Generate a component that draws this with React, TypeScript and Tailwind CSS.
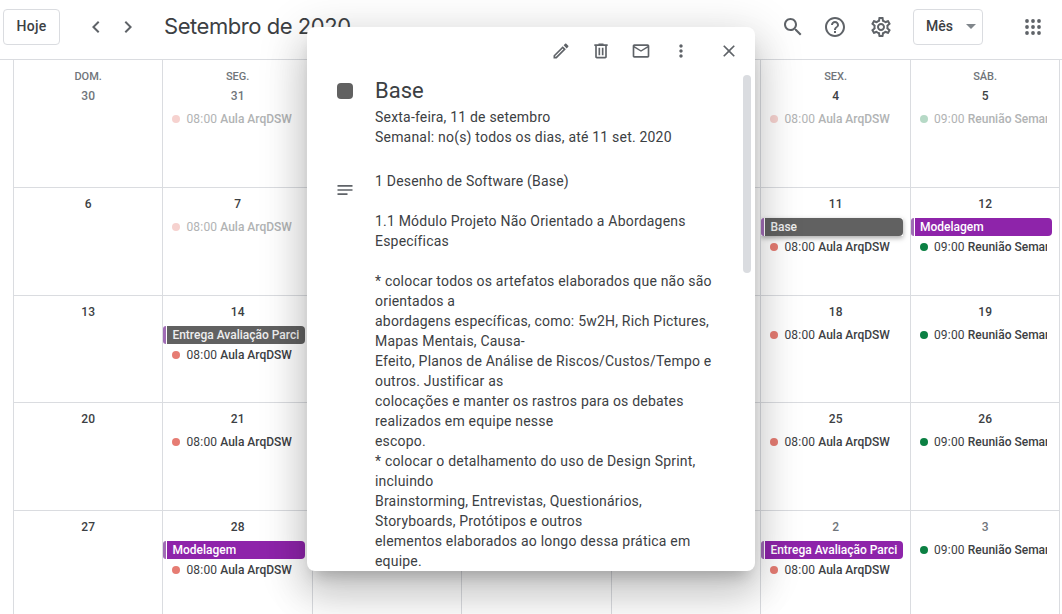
import React from "react";

interface IconProps {
  d: string;
  className?: string;
}

type CalEvent =
  | { kind: "timed"; time: string; title: string; color: "red" | "green"; past?: boolean }
  | { kind: "chip"; title: string; color: "purple" | "graphite"; raised?: boolean };

interface Day {
  label: string;
  muted?: boolean;
  events?: CalEvent[];
}

const Icon: React.FC<IconProps> = ({ d, className }) => (
  <svg viewBox="0 0 24 24" className={className} fill="currentColor">
    <path d={d} />
  </svg>
);

const paths = {
  left: "M15.41 7.41L14 6l-6 6 6 6 1.41-1.41L10.83 12z",
  right: "M10 6L8.59 7.41 13.17 12l-4.58 4.59L10 18l6-6z",
  search:
    "M15.5 14h-.79l-.28-.27C15.41 12.59 16 11.11 16 9.5 16 5.91 13.09 3 9.5 3S3 5.91 3 9.5 5.91 16 9.5 16c1.61 0 3.09-.59 4.23-1.57l.27.28v.79l5 4.99L20.49 19l-4.99-5zm-6 0C7.01 14 5 11.99 5 9.5S7.01 5 9.5 5 14 7.01 14 9.5 11.99 14 9.5 14z",
  help:
    "M11 18h2v-2h-2v2zm1-16C6.48 2 2 6.48 2 12s4.48 10 10 10 10-4.48 10-10S17.52 2 12 2zm0 18c-4.41 0-8-3.59-8-8s3.59-8 8-8 8 3.59 8 8-3.59 8-8 8zm0-14c-2.21 0-4 1.79-4 4h2c0-1.1.9-2 2-2s2 .9 2 2c0 2-3 1.75-3 5h2c0-2.25 3-2.5 3-5 0-2.21-1.79-4-4-4z",
  settings:
    "M19.43 12.98c.04-.32.07-.64.07-.98 0-.34-.03-.66-.07-.98l2.11-1.65c.19-.15.24-.42.12-.64l-2-3.46c-.09-.16-.26-.25-.44-.25-.06 0-.12.01-.17.03l-2.49 1c-.52-.4-1.08-.73-1.69-.98l-.38-2.65C14.46 2.18 14.25 2 14 2h-4c-.25 0-.46.18-.49.42l-.38 2.65c-.61.25-1.17.59-1.69.98l-2.49-1c-.06-.02-.12-.03-.18-.03-.17 0-.34.09-.43.25l-2 3.46c-.13.22-.07.49.12.64l2.11 1.65c-.04.32-.07.65-.07.98 0 .33.03.66.07.98l-2.11 1.65c-.19.15-.24.42-.12.64l2 3.46c.09.16.26.25.44.25.06 0 .12-.01.17-.03l2.49-1c.52.4 1.08.73 1.69.98l.38 2.65c.03.24.24.42.49.42h4c.25 0 .46-.18.49-.42l.38-2.65c.61-.25 1.17-.59 1.69-.98l2.49 1c.06.02.12.03.18.03.17 0 .34-.09.43-.25l2-3.46c.12-.22.07-.49-.12-.64l-2.11-1.65zm-1.98-1.71c.04.31.05.52.05.73 0 .21-.02.43-.05.73l-.14 1.13.89.7 1.08.84-.7 1.21-1.27-.51-1.04-.42-.9.68c-.43.32-.84.56-1.25.73l-1.06.43-.16 1.13-.2 1.35h-1.4l-.19-1.35-.16-1.13-1.06-.43c-.43-.18-.83-.41-1.23-.71l-.91-.7-1.06.43-1.27.51-.7-1.21 1.08-.84.89-.7-.14-1.13c-.03-.31-.05-.54-.05-.74s.02-.43.05-.73l.14-1.13-.89-.7-1.08-.84.7-1.21 1.27.51 1.04.42.9-.68c.43-.32.84-.56 1.25-.73l1.06-.43.16-1.13.2-1.35h1.39l.19 1.35.16 1.13 1.06.43c.43.18.83.41 1.23.71l.91.7 1.06-.43 1.27-.51.7 1.21-1.07.85-.89.7.14 1.13zM12 8c-2.21 0-4 1.79-4 4s1.79 4 4 4 4-1.79 4-4-1.79-4-4-4zm0 6c-1.1 0-2-.9-2-2s.9-2 2-2 2 .9 2 2-.9 2-2 2z",
  edit:
    "M14.06 9.02l.92.92L5.92 19H5v-.92l9.06-9.06M17.66 3c-.25 0-.51.1-.7.29l-1.83 1.83 3.75 3.75 1.83-1.83c.39-.39.39-1.02 0-1.41l-2.34-2.34c-.2-.2-.45-.29-.71-.29zm-3.6 3.19L3 17.25V21h3.75L17.81 9.94l-3.75-3.75z",
  trash:
    "M15 4V3H9v1H4v2h1v13c0 1.1.9 2 2 2h10c1.1 0 2-.9 2-2V6h1V4h-5zm2 15H7V6h10v13zM9 8h2v9H9zm4 0h2v9h-2z",
  mail:
    "M22 6c0-1.1-.9-2-2-2H4c-1.1 0-2 .9-2 2v12c0 1.1.9 2 2 2h16c1.1 0 2-.9 2-2V6zm-2 0l-8 5-8-5h16zm0 12H4V8l8 5 8-5v10z",
  more:
    "M12 8c1.1 0 2-.9 2-2s-.9-2-2-2-2 .9-2 2 .9 2 2 2zm0 2c-1.1 0-2 .9-2 2s.9 2 2 2 2-.9 2-2-.9-2-2-2zm0 6c-1.1 0-2 .9-2 2s.9 2 2 2 2-.9 2-2-.9-2-2-2z",
  close:
    "M19 6.41L17.59 5 12 10.59 6.41 5 5 6.41 10.59 12 5 17.59 6.41 19 12 13.41 17.59 19 19 17.59 13.41 12z",
  notes: "M3 18h12v-2H3v2zM3 6v2h18V6H3zm0 7h18v-2H3v2z",
};

const aula = (past?: boolean): CalEvent => ({
  kind: "timed",
  time: "08:00",
  title: "Aula ArqDSW",
  color: "red",
  past,
});
const reuniao = (past?: boolean): CalEvent => ({
  kind: "timed",
  time: "09:00",
  title: "Reunião Semanal",
  color: "green",
  past,
});

const weekDays = ["DOM.", "SEG.", "TER.", "QUA.", "QUI.", "SEX.", "SÁB."];

const weeks: Day[][] = [
  [
    { label: "30", muted: true },
    { label: "31", muted: true, events: [aula(true)] },
    { label: "1" },
    { label: "2" },
    { label: "3" },
    { label: "4", events: [aula(true)] },
    { label: "5", events: [reuniao(true)] },
  ],
  [
    { label: "6" },
    { label: "7", events: [aula(true)] },
    { label: "8" },
    { label: "9" },
    { label: "10" },
    {
      label: "11",
      events: [{ kind: "chip", title: "Base", color: "graphite", raised: true }, aula()],
    },
    {
      label: "12",
      events: [{ kind: "chip", title: "Modelagem", color: "purple" }, reuniao()],
    },
  ],
  [
    { label: "13" },
    {
      label: "14",
      events: [{ kind: "chip", title: "Entrega Avaliação Parcial", color: "graphite" }, aula()],
    },
    { label: "15" },
    { label: "16" },
    { label: "17" },
    { label: "18", events: [aula()] },
    { label: "19", events: [reuniao()] },
  ],
  [
    { label: "20" },
    { label: "21", events: [aula()] },
    { label: "22" },
    { label: "23" },
    { label: "24" },
    { label: "25", events: [aula()] },
    { label: "26", events: [reuniao()] },
  ],
  [
    { label: "27" },
    {
      label: "28",
      events: [{ kind: "chip", title: "Modelagem", color: "purple" }, aula()],
    },
    { label: "29" },
    { label: "30" },
    { label: "1", muted: true },
    {
      label: "2",
      muted: true,
      events: [{ kind: "chip", title: "Entrega Avaliação Parcial", color: "purple" }, aula()],
    },
    { label: "3", muted: true, events: [reuniao()] },
  ],
];

const description = [
  "1 Desenho de Software (Base)",
  "",
  "1.1 Módulo Projeto Não Orientado a Abordagens",
  "Específicas",
  "",
  "* colocar todos os artefatos elaborados que não são",
  "orientados a",
  "abordagens específicas, como: 5w2H, Rich Pictures,",
  "Mapas Mentais, Causa-",
  "Efeito, Planos de Análise de Riscos/Custos/Tempo e",
  "outros. Justificar as",
  "colocações e manter os rastros para os debates",
  "realizados em equipe nesse",
  "escopo.",
  "* colocar o detalhamento do uso de Design Sprint,",
  "incluindo",
  "Brainstorming, Entrevistas, Questionários,",
  "Storyboards, Protótipos e outros",
  "elementos elaborados ao longo dessa prática em",
  "equipe.",
];

const EventRow: React.FC<{ event: CalEvent }> = ({ event }) => {
  if (event.kind === "chip") {
    return (
      <div
        className={`flex h-[18px] mr-[7px] text-[12px] leading-[18px] font-medium whitespace-nowrap ${
          event.raised ? "shadow-[0_2px_5px_rgba(0,0,0,0.35)]" : ""
        }`}
      >
        <span className="w-[3px] shrink-0 rounded-l-[3px] bg-[#a06cb5]" />
        <span
          className={`ml-px flex min-w-0 flex-1 rounded-r-[4px] pl-[5px] pr-[6px] ${
            event.color === "purple" ? "bg-[#8e24aa] text-white" : "bg-[#616161] text-[#eeeeee]"
          }`}
        >
          <span className="min-w-0 overflow-hidden">{event.title}</span>
        </span>
      </div>
    );
  }
  const dot = event.past
    ? event.color === "red"
      ? "bg-[#f6d2cf]"
      : "bg-[#b6d9c6]"
    : event.color === "red"
      ? "bg-[#e67c73]"
      : "bg-[#0b8043]";
  const text = event.past ? "text-[#b1b3b4]" : "text-[#3c4043]";
  return (
    <div className="flex items-center h-[18px] mr-2 pl-[9px] pr-1 text-[12px] leading-[18px] whitespace-nowrap">
      <span className={`size-2 shrink-0 rounded-full ${dot}`} />
      <span className={`ml-1.5 tracking-[0.2px] ${text}`}>{event.time}</span>
      <span className={`ml-[3px] min-w-0 overflow-hidden font-medium ${text}`}>{event.title}</span>
    </div>
  );
};

export default function App() {
  return (
    <div className="relative h-[614px] w-[1062px] overflow-hidden bg-white font-['Roboto',sans-serif] text-[#3c4043]">
      {/* Top bar */}
      <header className="flex h-[60px] items-center border-b border-[#dadce0] pb-[6px] pl-[3px] pr-[21px]">
        <button className="h-9 w-[57px] rounded border border-[#dadce0] text-[14px] font-medium tracking-[0.25px]">
          Hoje
        </button>
        <Icon d={paths.left} className="ml-6 size-6 text-[#5f6368]" />
        <Icon d={paths.right} className="ml-2 size-6 text-[#5f6368]" />
        <h1 className="ml-6 font-['Inter',sans-serif] text-[22px] font-normal tracking-[-0.45px]">
          Setembro de 2020
        </h1>
        <div className="ml-auto flex items-center">
          <Icon d={paths.search} className="size-6 text-[#5f6368]" />
          <Icon d={paths.help} className="ml-[18px] size-6 text-[#5f6368]" />
          <Icon d={paths.settings} className="ml-[22px] size-6 text-[#5f6368]" />
          <button className="ml-5 flex h-9 w-[70px] items-center rounded border border-[#dadce0] pl-3 text-[14px] font-medium">
            Mês
            <span className="ml-[13px] size-0 border-x-[5px] border-t-[5px] border-x-transparent border-t-[#80868b]" />
          </button>
          <svg viewBox="0 0 16 16" className="ml-[42px] size-4 text-[#5f6368]" fill="currentColor">
            {[2, 8, 14].map((cy) =>
              [2, 8, 14].map((cx) => <circle key={`${cx}-${cy}`} cx={cx} cy={cy} r="1.9" />)
            )}
          </svg>
        </div>
      </header>

      {/* Month grid */}
      <div className="ml-[12.9px] grid w-[1047.5px] grid-cols-[repeat(7,149.5px)] grid-rows-[127px_108px_107px_108px_104px] border-r border-[#dadce0]">
        {weeks.map((week, w) =>
          week.map((day, d) => (
            <div
              key={`${w}-${d}`}
              className={`min-w-0 overflow-hidden border-l border-[#dadce0] ${
                w === 0 ? "pt-[10px]" : "border-t pt-2"
              }`}
            >
              {w === 0 && (
                <div className="h-[14px] text-center text-[11px] leading-[14px] font-medium text-[#70757a]">
                  {weekDays[d]}
                </div>
              )}
              <div
                className={`h-4 text-center text-[12px] leading-4 font-medium ${
                  w === 0 ? "mt-[4px]" : ""
                } ${day.muted ? "text-[#70757a]" : "text-[#3c4043]"}`}
              >
                {day.label}
              </div>
              <div className="mt-[6px] flex flex-col gap-0.5">
                {day.events?.map((event, i) => <EventRow key={i} event={event} />)}
              </div>
            </div>
          ))
        )}
      </div>

      {/* Event details popup */}
      <div className="absolute left-[307px] top-[27px] flex h-[544px] w-[448px] flex-col overflow-hidden rounded-lg bg-white shadow-[0_24px_38px_3px_rgba(0,0,0,0.14),0_9px_46px_8px_rgba(0,0,0,0.12),0_11px_15px_-7px_rgba(0,0,0,0.2)]">
        <div className="flex h-12 shrink-0 items-center pl-[244px] text-[#5f6368]">
          <Icon d={paths.edit} className="size-5" />
          <Icon d={paths.trash} className="ml-5 size-5" />
          <Icon d={paths.mail} className="ml-5 size-5" />
          <Icon d={paths.more} className="ml-5 size-5" />
          <Icon d={paths.close} className="ml-7 size-5" />
        </div>
        <div className="relative min-h-0 flex-1 overflow-hidden">
          <div className="flex pl-[30px]">
            <span className="mt-[8px] size-4 shrink-0 rounded bg-[#616161]" />
            <div className="ml-[22px]">
              <div className="h-8 text-[22px] leading-8">Base</div>
              <div className="text-[14px] leading-5 tracking-[0.2px]">Sexta-feira, 11 de setembro</div>
              <div className="text-[14px] leading-5 tracking-[0.2px]">
                Semanal: no(s) todos os dias, até 11 set. 2020
              </div>
            </div>
          </div>
          <div className="mt-[24px] flex pl-[28px]">
            <Icon d={paths.notes} className="mt-[9px] size-5 shrink-0 text-[#5f6368]" />
            <div className="ml-5 text-[14px] leading-5 tracking-[0.2px]">
              {description.map((line, i) => (
                <div key={i} className="h-5 whitespace-nowrap">
                  {line}
                </div>
              ))}
            </div>
          </div>
          <div className="absolute left-[436px] top-0 h-[198px] w-2 rounded bg-[#dadce0]" />
        </div>
      </div>
    </div>
  );
}
